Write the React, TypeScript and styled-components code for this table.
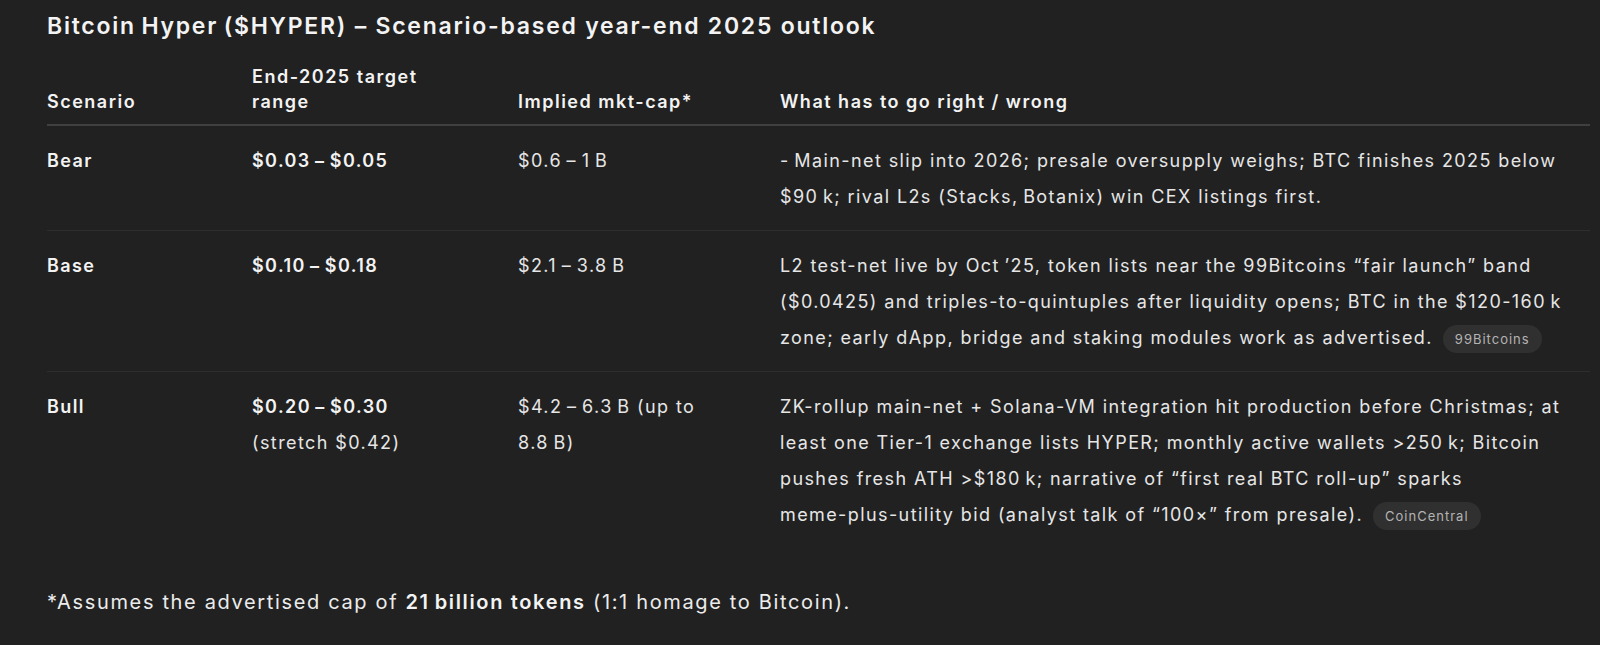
import React from "react";
import styled, { createGlobalStyle } from "styled-components";

const GlobalStyle = createGlobalStyle`
    html, body {
        margin: 0;
        padding: 0;
        background: #212121;
    }
    body {
        font-family: "Inter", "Noto Sans", sans-serif;
        color: #ececec;
    }
`;

const Page = styled.div`
    padding: 10px 10px 0 47px;
    min-height: 645px;
    box-sizing: border-box;
`;

const Title = styled.h3`
    margin: 0;
    font-size: 23px;
    line-height: 32px;
    font-weight: 600;
    letter-spacing: 1.75px;
    color: #f3f3f3;
`;

const Table = styled.table`
    width: 1543px;
    margin-top: 22px;
    border-collapse: collapse;
    table-layout: fixed;
    font-size: 18px;
    letter-spacing: 1.4px;
`;

const HeadCell = styled.th`
    text-align: left;
    vertical-align: bottom;
    font-weight: 600;
    line-height: 25px;
    letter-spacing: 1.5px;
    padding: 0 40px 10px 0;
    color: #f3f3f3;
    border-bottom: 2px solid #404040;
`;

const Row = styled.tr<{ $last?: boolean }>`
    border-bottom: ${(p) => (p.$last ? "none" : "1px solid #2e2e2e")};
`;

const Cell = styled.td<{ $strong?: boolean }>`
    vertical-align: top;
    line-height: 36px;
    padding: 17px 40px 15px 0;
    font-weight: ${(p) => (p.$strong ? 600 : 400)};
    color: ${(p) => (p.$strong ? "#f3f3f3" : "#e6e6e6")};

    &:last-child {
        padding-right: 16px;
    }
`;

const Strong = styled.strong`
    font-weight: 600;
    color: #f3f3f3;
`;

const NoBreak = styled.span`
    white-space: nowrap;
`;

const Source = styled.span`
    display: inline-block;
    margin: -4px 0 -4px 10px;
    padding: 0 12px;
    height: 28px;
    line-height: 28px;
    border-radius: 14px;
    background: #303030;
    color: #b4b4b4;
    font-size: 13px;
    letter-spacing: 1px;
    vertical-align: middle;
`;

const Footnote = styled.p`
    margin: 39px 0 0;
    font-size: 20px;
    line-height: 30px;
    letter-spacing: 1.65px;
    color: #ececec;
`;

type Scenario = {
    name: string;
    range: string;
    stretch?: string;
    cap: React.ReactNode;
    story: React.ReactNode;
    source?: string;
};

// thin space, as the source uses around dashes and before units
const T = "\u2009";

const scenarios: Scenario[] = [
    {
        name: "Bear",
        range: `$0.03${T}–${T}$0.05`,
        cap: `$0.6${T}–${T}1${T}B`,
        story: (
            <>
                -{T}Main-net slip into 2026; presale oversupply weighs; BTC finishes 2025 below{" "}
                <NoBreak>$90{T}k;</NoBreak> rival L2s (Stacks,{T}Botanix) win CEX listings first.
            </>
        ),
    },
    {
        name: "Base",
        range: `$0.10${T}–${T}$0.18`,
        cap: `$2.1${T}–${T}3.8${T}B`,
        story: (
            <>
                L2 test-net live by Oct{T}’25, token lists near the 99Bitcoins “fair launch” band ($0.0425) and
                triples-to-quintuples after liquidity opens; BTC in the <NoBreak>$120-160{T}k</NoBreak> zone; early
                dApp, bridge and staking modules work as advertised.
            </>
        ),
        source: "99Bitcoins",
    },
    {
        name: "Bull",
        range: `$0.20${T}–${T}$0.30`,
        stretch: "(stretch $0.42)",
        cap: (
            <>
                $4.2{T}–{T}6.3{T}B (up to <NoBreak>8.8{T}B)</NoBreak>
            </>
        ),
        story: (
            <>
                ZK-rollup main-net + Solana-VM integration hit production before Christmas; at least one Tier-1
                exchange lists HYPER; monthly active wallets <NoBreak>&gt;250{T}k;</NoBreak> Bitcoin pushes fresh ATH{" "}
                <NoBreak>&gt;$180{T}k;</NoBreak> narrative of “first real BTC roll-up” sparks{" "}
                <NoBreak>meme-plus-utility</NoBreak> bid (analyst talk of “100×” from presale).
            </>
        ),
        source: "CoinCentral",
    },
];

const App: React.FC = () => {
    return (
        <Page>
            <GlobalStyle />
            <Title>
                Bitcoin{T}Hyper{T}($HYPER) – Scenario-based year-end 2025 outlook
            </Title>
            <Table>
                <colgroup>
                    <col style={{ width: 205 }} />
                    <col style={{ width: 266 }} />
                    <col style={{ width: 262 }} />
                    <col />
                </colgroup>
                <thead>
                    <tr>
                        <HeadCell>Scenario</HeadCell>
                        <HeadCell>
                            End-2025 target
                            <br />
                            range
                        </HeadCell>
                        <HeadCell>Implied mkt-cap*</HeadCell>
                        <HeadCell>What has to go right / wrong</HeadCell>
                    </tr>
                </thead>
                <tbody>
                    {scenarios.map((s, i) => (
                        <Row key={s.name} $last={i === scenarios.length - 1}>
                            <Cell $strong>{s.name}</Cell>
                            <Cell>
                                <Strong>
                                    <NoBreak>{s.range}</NoBreak>
                                </Strong>
                                {s.stretch && (
                                    <>
                                        <br />
                                        {s.stretch}
                                    </>
                                )}
                            </Cell>
                            <Cell>{s.cap}</Cell>
                            <Cell>
                                {s.story}
                                {s.source && <Source>{s.source}</Source>}
                            </Cell>
                        </Row>
                    ))}
                </tbody>
            </Table>
            <Footnote>
                *Assumes the advertised cap of <Strong>21{T}billion tokens</Strong> (1:1 homage to Bitcoin).
            </Footnote>
        </Page>
    );
};

export default App;
